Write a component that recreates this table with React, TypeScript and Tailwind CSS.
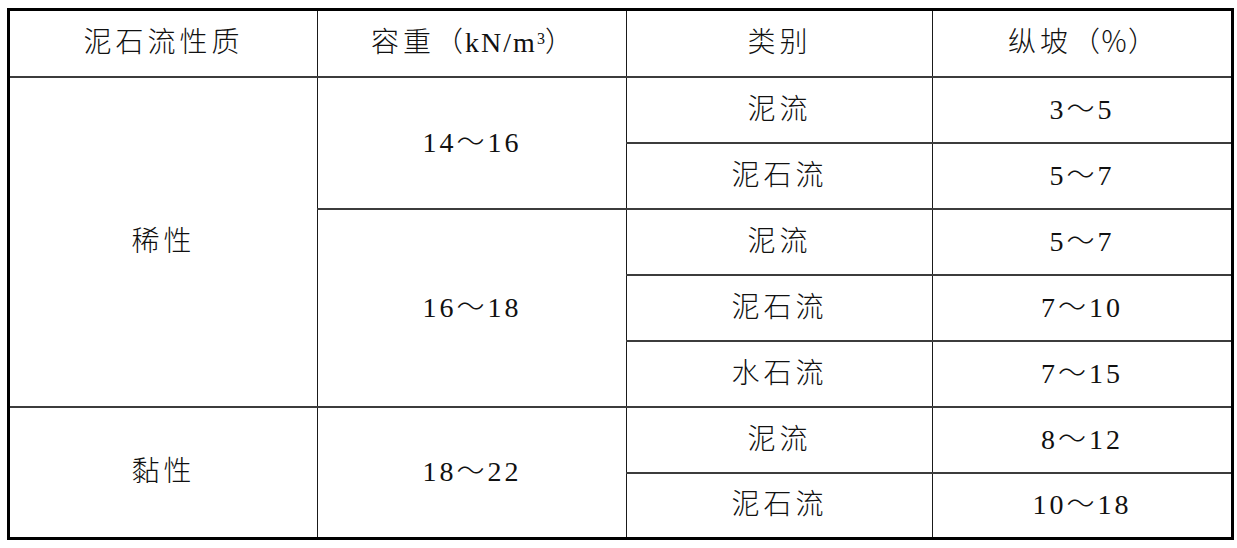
const font = {
  fontFamily: '"Liberation Serif", "Noto Sans CJK SC", serif',
};

interface Row {
  nature?: { text: string; span: number };
  weight?: { text: string; span: number };
  kind: string;
  slope: string;
}

const rows: Row[] = [
  { nature: { text: "稀性", span: 5 }, weight: { text: "14～16", span: 2 }, kind: "泥流", slope: "3～5" },
  { kind: "泥石流", slope: "5～7" },
  { weight: { text: "16～18", span: 3 }, kind: "泥流", slope: "5～7" },
  { kind: "泥石流", slope: "7～10" },
  { kind: "水石流", slope: "7～15" },
  { nature: { text: "黏性", span: 2 }, weight: { text: "18～22", span: 2 }, kind: "泥流", slope: "8～12" },
  { kind: "泥石流", slope: "10～18" },
];

const cell =
  "border-x border-y-2 border-x-[#1a1a1a] border-y-[#3c3c3c] text-center align-middle font-light";

export default function App() {
  return (
    <div className="h-[548px] w-[1237px] bg-white pl-[7px] pt-[8px] text-[#111]" style={font}>
      <table className="w-[1224px] table-fixed border-collapse border-[3px] border-black text-[28px] leading-none">
        <colgroup>
          <col className="w-[309px]" />
          <col className="w-[309px]" />
          <col className="w-[306px]" />
          <col className="w-[300px]" />
        </colgroup>
        <thead>
          <tr className="h-[67px]">
            <th className={`${cell} tracking-[4px]`}>泥石流性质</th>
            <th className={cell}>
              <span className="tracking-[4px]">容重</span>
              <span className="tracking-[2px]">（kN/m</span>
              <sup className="text-[16px]">3</sup>
              <span>）</span>
            </th>
            <th className={`${cell} tracking-[4px]`}>类别</th>
            <th className={cell}>
              <span className="tracking-[4px]">纵坡</span>（％）
            </th>
          </tr>
        </thead>
        <tbody>
          {rows.map((r, i) => (
            <tr key={i} className="h-[66px]">
              {r.nature && (
                <td rowSpan={r.nature.span} className={`${cell} tracking-[4px]`}>
                  {r.nature.text}
                </td>
              )}
              {r.weight && (
                <td rowSpan={r.weight.span} className={`${cell} tracking-[3px]`}>
                  {r.weight.text}
                </td>
              )}
              <td className={`${cell} tracking-[4px]`}>{r.kind}</td>
              <td className={`${cell} tracking-[3px]`}>{r.slope}</td>
            </tr>
          ))}
        </tbody>
      </table>
    </div>
  );
}
